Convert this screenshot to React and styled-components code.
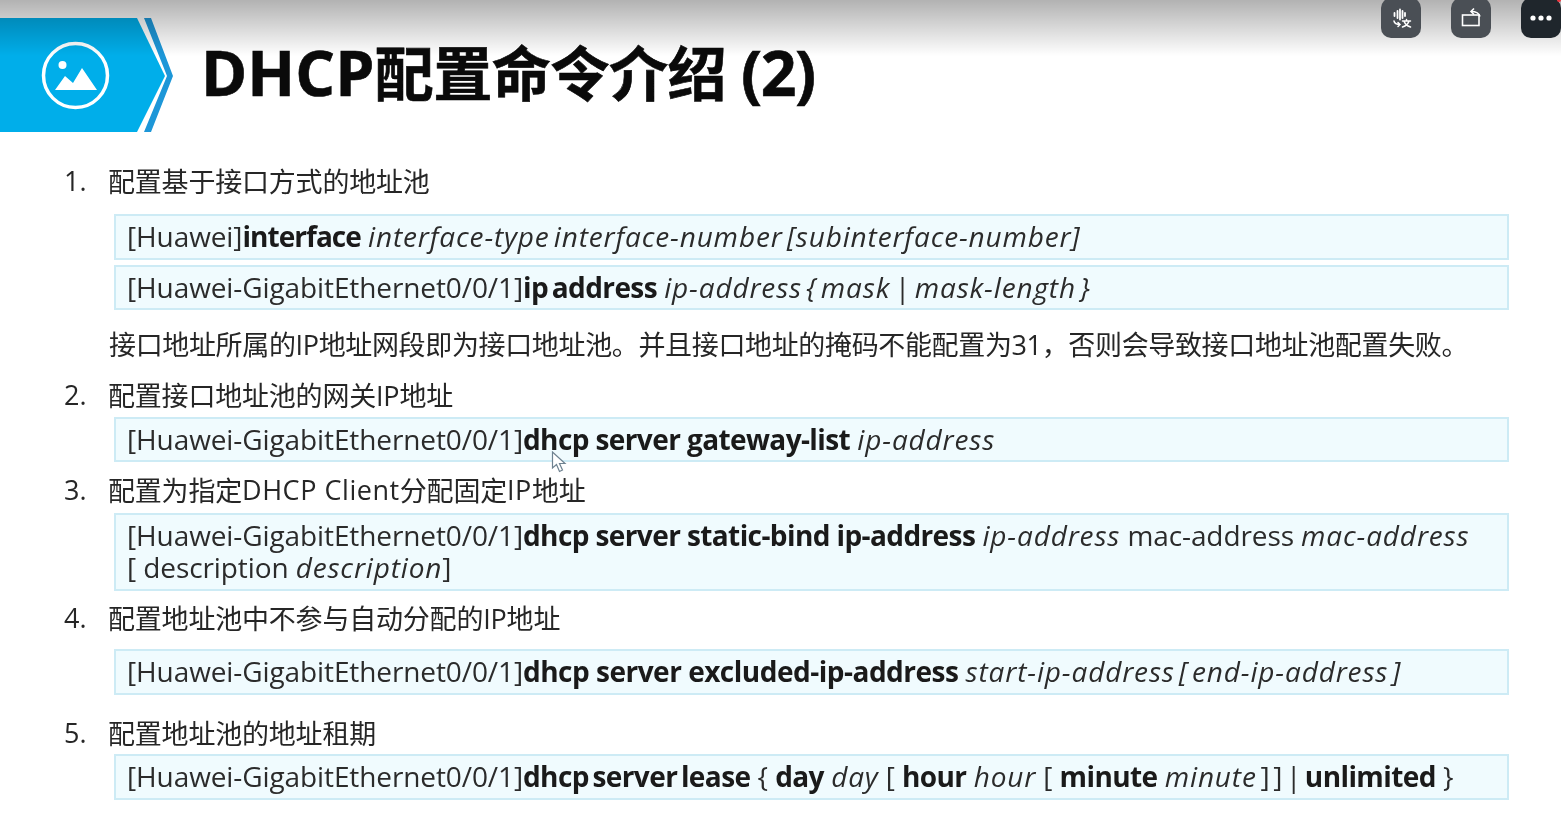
import React from 'react';
import styled, { createGlobalStyle } from 'styled-components';

const GlobalStyle = createGlobalStyle`
  html, body {
    margin: 0;
    padding: 0;
    background: #fff;
    overflow: hidden;
  }
`;

const Page = styled.div`
  position: relative;
  width: 1561px;
  height: 814px;
  overflow: hidden;
  background: #fff;
  font-family: "Open Sans", "Noto Sans CJK SC", sans-serif;
  color: #262626;
`;

const Slide = styled.div`
  filter: blur(0.5px);
`;

const Header = styled.header`
  display: flex;
  align-items: center;
  gap: 28px;
  height: 114px;
  padding-top: 18px;
`;

const Title = styled.h1`
  margin: 0;
  padding-bottom: 6px;
  font-size: 59.2px;
  line-height: 108px;
  font-weight: 700;
  color: #0a0a0a;
  letter-spacing: -0.6px;
  white-space: nowrap;
  -webkit-text-stroke: 0.6px #0a0a0a;
`;

const TitleLatin = styled.span`
  font-size: 62.5px;
  letter-spacing: ${(p) => p.$ls}px;
`;

const Content = styled.main`
  display: flex;
  flex-direction: column;
  padding: 0 52px 0 64px;
`;

const Heading = styled.div`
  display: flex;
  box-sizing: border-box;
  height: 34px;
  padding-bottom: 4px;
  align-items: center;
  margin-top: ${(p) => p.$top}px;
  font-size: 27px;
  letter-spacing: -0.2px;
  white-space: pre;
`;

const Num = styled.span`
  width: 44px;
  flex: none;
  letter-spacing: 0;
`;

const WideLatin = styled.span`
  letter-spacing: 0.55px;
`;

const CommandBox = styled.div`
  margin: ${(p) => p.$top}px 0 0 50px;
  min-height: ${(p) => p.$height}px;
  box-sizing: border-box;
  padding: 4px 11px 0;
  border: 2px solid #cdebf5;
  background: #f0fbfe;
  font-size: 28px;
  line-height: 32px;
  letter-spacing: -0.1px;
  white-space: nowrap;
  color: #2b2b2b;
`;

const Kw = styled.b`
  font-weight: 700;
  color: #1a1a1a;
  letter-spacing: ${(p) => p.$ls ?? -0.6}px;
  word-spacing: ${(p) => (p.$tight ? -3 : 0)}px;
`;

const Arg = styled.i`
  font-style: italic;
  letter-spacing: 0.85px;
  word-spacing: -4px;
`;

const Tight = styled.span`
  word-spacing: -3.5px;
`;

const Note = styled.p`
  margin: 18px 0 0 45px;
  height: 34px;
  font-size: 27px;
  line-height: 34px;
  letter-spacing: -0.35px;
  white-space: nowrap;
`;

const TopShade = styled.div`
  position: absolute;
  inset: 0 0 auto 0;
  height: 56px;
  background: linear-gradient(180deg, rgba(0, 0, 0, 0.3), rgba(0, 0, 0, 0));
  pointer-events: none;
`;

const ToolBar = styled.div`
  position: absolute;
  top: -2px;
  right: 0;
  display: flex;
  gap: 30px;
`;

const ToolButton = styled.div`
  position: relative;
  width: 40px;
  height: 40px;
  border-radius: 10px;
  background: ${(p) => (p.$dark ? '#1f262c' : '#4a4f55')};
  display: flex;
  align-items: center;
  justify-content: center;
`;

const RedDot = styled.span`
  position: absolute;
  top: 0;
  right: 0;
  width: 4px;
  height: 4px;
  border-radius: 50%;
  background: #f0323c;
`;

const Cursor = styled.svg`
  position: absolute;
  left: 551px;
  top: 451px;
`;

const Banner = () => (
  <svg width="173" height="114" viewBox="0 18 173 114" style={{ flex: 'none' }}>
    <polygon points="0,18 137,18 165,76 137,132 0,132" fill="#00aeea" />
    <polygon points="144,18 151,18 173,76 151,132 144,132 167,76" fill="#1d97d8" />
    <circle cx="75.5" cy="75.5" r="32" fill="none" stroke="#fff" strokeWidth="3.5" />
    <circle cx="62.5" cy="65" r="4" fill="#fff" />
    <polygon points="55,90 65,76 73,83 82,68 97,90" fill="#fff" />
  </svg>
);

export default function App() {
  return (
    <Page>
      <GlobalStyle />
      <Slide>
        <Header>
          <Banner />
          <Title><TitleLatin $ls={0.1}>DHCP</TitleLatin>配置命令介绍 <TitleLatin $ls={-1.4}>(2)</TitleLatin></Title>
        </Header>
        <Content>
          <Heading $top={33}><Num>1.</Num>配置基于接口方式的地址池</Heading>
          <CommandBox $top={15} $height={46}>
            [Huawei]<Kw $ls={-0.95}>interface</Kw> <Arg>interface-type interface-number [subinterface-number]</Arg>
          </CommandBox>
          <CommandBox $top={5} $height={45}>
            [Huawei-GigabitEthernet0/0/1]<Kw $tight>ip address</Kw> <Arg>ip-address {'{'} mask | mask-length {'}'}</Arg>
          </CommandBox>
          <Note>接口地址所属的IP地址网段即为接口地址池。并且接口地址的掩码不能配置为31，否则会导致接口地址池配置失败。</Note>
          <Heading $top={17}><Num>2.</Num>配置接口地址池的网关IP地址</Heading>
          <CommandBox $top={4} $height={45}>
            [Huawei-GigabitEthernet0/0/1]<Kw>dhcp server gateway-list</Kw> <Arg>ip-address</Arg>
          </CommandBox>
          <Heading $top={12}><Num>3.</Num>配置为指定<WideLatin>DHCP Client</WideLatin>分配固定<WideLatin>IP</WideLatin>地址</Heading>
          <CommandBox $top={5} $height={78}>
            [Huawei-GigabitEthernet0/0/1]<Kw>dhcp server static-bind ip-address</Kw> <Arg>ip-address</Arg> mac-address <Arg>mac-address</Arg>
            <br />
            [ description <Arg>description</Arg>]
          </CommandBox>
          <Heading $top={11}><Num>4.</Num>配置地址池中不参与自动分配的IP地址</Heading>
          <CommandBox $top={13} $height={46}>
            [Huawei-GigabitEthernet0/0/1]<Kw $ls={-0.5}>dhcp server excluded-ip-address</Kw> <Arg>start-ip-address [ end-ip-address ]</Arg>
          </CommandBox>
          <Heading $top={22}><Num>5.</Num>配置地址池的地址租期</Heading>
          <CommandBox $top={3} $height={46}>
            [Huawei-GigabitEthernet0/0/1]<Kw $tight>dhcp server lease</Kw> {'{'} <Kw>day</Kw> <Arg>day</Arg> [ <Kw>hour</Kw> <Arg>hour</Arg> [ <Kw>minute</Kw> <Arg>minute</Arg><Tight> ] ] | </Tight><Kw>unlimited</Kw> {'}'}
          </CommandBox>
        </Content>
      </Slide>
      <Cursor width="17" height="22" viewBox="0 0 17 22">
        <path d="M1.5 1 L1.5 17 L5.5 13.5 L8.5 20.5 L11.5 19 L8.5 12.5 L14 12.5 Z" fill="#fff" stroke="#6f8290" strokeWidth="1.2" />
      </Cursor>
      <TopShade />
      <ToolBar>
        <ToolButton>
          <svg width="24" height="24" viewBox="0 0 24 24" fill="none" stroke="#fff" strokeWidth="1.8" strokeLinecap="round">
            <path d="M5.5 7v3M8.5 5v7M11 3.5v10M13.5 5v7M16 7v3" />
            <path d="M5 15c.5 2.5 2.5 3.5 6 3.5M9 16.5l2 2-2 2" strokeWidth="1.5" />
            <path d="M13.5 15h8M17.5 13.5V15M15 15c.8 3 3 5 6.5 6M20 15c-.8 3-3 5-6.5 6" strokeWidth="1.5" />
          </svg>
        </ToolButton>
        <ToolButton>
          <svg width="22" height="22" viewBox="0 0 22 22" fill="none" stroke="#fff" strokeWidth="1.6">
            <rect x="2.5" y="8" width="16.5" height="10.5" />
            <path d="M11 4.5c5 0 8 1 9 5" />
            <path d="M14 1.5l-3 3 3 3" />
          </svg>
        </ToolButton>
        <ToolButton $dark>
          <svg width="24" height="8" viewBox="0 0 24 8" fill="#fff">
            <circle cx="4" cy="4" r="2.6" />
            <circle cx="12" cy="4" r="2.6" />
            <circle cx="20" cy="4" r="2.6" />
          </svg>
          <RedDot />
        </ToolButton>
      </ToolBar>
    </Page>
  );
}
